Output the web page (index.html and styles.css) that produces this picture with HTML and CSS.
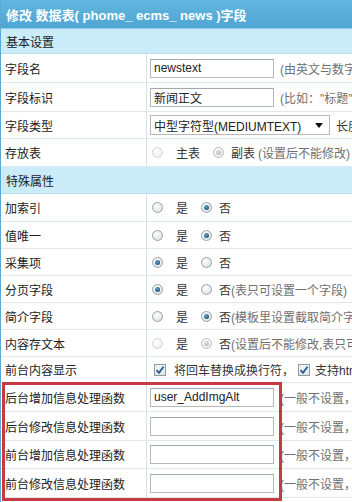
FILE: index.html
```html
<!DOCTYPE html>
<html lang="zh-CN">
<head>
<meta charset="utf-8">
<title>修改字段</title>
<link rel="stylesheet" href="styles.css">
</head>
<body>
<div class="page">
  <div class="head">修改 数据表( phome_ ecms_ news )字段</div>
  <div class="sec">基本设置</div>
  <div class="row h29"><div class="lab">字段名</div><div class="val"><span class="inp">newstext</span><span class="note">(由英文与数字组成，且不能以数字开头)</span></div></div>
  <div class="row h29"><div class="lab">字段标识</div><div class="val"><span class="inp">新闻正文</span><span class="note">(比如："标题")</span></div></div>
  <div class="row h27"><div class="lab">字段类型</div><div class="val"><span class="sel">中型字符型(MEDIUMTEXT)<span class="arr"></span></span><span class="txt ml6">长度</span></div></div>
  <div class="row h28"><div class="lab">存放表</div><div class="val"><span class="rd dis"></span><span class="txt opt">主表</span><span class="rd dis on"></span><span class="txt opt2">副表</span><span class="note ml3">(设置后不能修改)</span></div></div>
  <div class="sec h27">特殊属性</div>
  <div class="row h28"><div class="lab">加索引</div><div class="val"><span class="rd"></span><span class="txt opt">是</span><span class="rd on"></span><span class="txt opt2">否</span></div></div>
  <div class="row h27"><div class="lab">值唯一</div><div class="val"><span class="rd"></span><span class="txt opt">是</span><span class="rd on"></span><span class="txt opt2">否</span></div></div>
  <div class="row h27"><div class="lab">采集项</div><div class="val"><span class="rd on"></span><span class="txt opt">是</span><span class="rd"></span><span class="txt opt2">否</span></div></div>
  <div class="row h27"><div class="lab">分页字段</div><div class="val"><span class="rd on"></span><span class="txt opt">是</span><span class="rd"></span><span class="txt opt2">否</span><span class="note ml0">(表只可设置一个字段)</span></div></div>
  <div class="row h27"><div class="lab">简介字段</div><div class="val"><span class="rd"></span><span class="txt opt">是</span><span class="rd on"></span><span class="txt opt2">否</span><span class="note ml0">(模板里设置截取简介字数)</span></div></div>
  <div class="row h27"><div class="lab">内容存文本</div><div class="val"><span class="rd dis"></span><span class="txt opt">是</span><span class="rd dis on"></span><span class="txt opt2">否</span><span class="note ml0">(设置后不能修改,表只可设置一个字段)</span></div></div>
  <div class="row h26"><div class="lab">前台内容显示</div><div class="val"><span class="cb"><svg viewBox="0 0 12 12" width="12" height="12"><path d="M2.5 6.2 L5 8.8 L9.6 2.6" fill="none" stroke="#2f5f8c" stroke-width="1.8"/></svg></span><span class="txt ml8">将回车替换成换行符，</span><span class="cb ml7"><svg viewBox="0 0 12 12" width="12" height="12"><path d="M2.5 6.2 L5 8.8 L9.6 2.6" fill="none" stroke="#2f5f8c" stroke-width="1.8"/></svg></span><span class="txt ml5">支持html代码</span></div></div>
  <div class="row h29"><div class="lab">后台增加信息处理函数</div><div class="val"><span class="inp">user_AddImgAlt</span><span class="note">(一般不设置，直接使用默认)</span></div></div>
  <div class="row h29"><div class="lab">后台修改信息处理函数</div><div class="val"><span class="inp"></span><span class="note">(一般不设置，直接使用默认)</span></div></div>
  <div class="row h28"><div class="lab">前台增加信息处理函数</div><div class="val"><span class="inp"></span><span class="note">(一般不设置，直接使用默认)</span></div></div>
  <div class="row h29"><div class="lab">前台修改信息处理函数</div><div class="val"><span class="inp"></span><span class="note">(一般不设置，直接使用默认)</span></div></div>
  <div class="row h27"><div class="lab"></div><div class="val"></div></div>
  <div class="redbox"></div>
</div>
</body>
</html>
```

FILE: styles.css
```css
html, body {
  margin: 0;
  padding: 0;
  background: #ffffff;
  overflow: hidden;
}
body {
  width: 352px;
  height: 502px;
  font-family: "Liberation Sans", "Noto Sans CJK SC", sans-serif;
  font-size: 12px;
  color: #333333;
}
.page {
  position: relative;
  width: 700px;
  border-left: 1px solid #5aa9d4;
}
.head {
  height: 29px;
  box-sizing: border-box;
  display: flex;
  align-items: center;
  padding-left: 5px;
  background: linear-gradient(#62b6de, #4fa6d3);
  color: #ffffff;
  font-weight: bold;
  font-size: 13px;
  white-space: nowrap;
  border-bottom: 1px solid #8fcbe6;
}
.sec {
  height: 25px;
  box-sizing: border-box;
  display: flex;
  align-items: center;
  padding-left: 5px;
  background: #c9ecf8;
  color: #222222;
  border-bottom: 1px solid #b9dfee;
}
.sec.h27 { height: 27px; }
.row {
  display: flex;
  box-sizing: border-box;
  border-bottom: 1px solid #dde8ef;
  white-space: nowrap;
}
.h26 { height: 26px; }
.h27 { height: 27px; }
.h28 { height: 28px; }
.h29 { height: 29px; }
.lab {
  width: 146px;
  flex: none;
  box-sizing: border-box;
  border-right: 1px solid #d5e3ec;
  padding-left: 4px;
  display: flex;
  align-items: center;
  color: #222222;
}
.val {
  flex: 1;
  display: flex;
  align-items: center;
  padding-left: 3px;
}
.inp {
  width: 124px;
  height: 19px;
  box-sizing: border-box;
  border: 1px solid #b5b9bd;
  border-top-color: #a3a8ad;
  background: #ffffff;
  display: flex;
  align-items: center;
  padding-left: 3px;
  color: #222222;
  flex: none;
}
.note {
  color: #707070;
  margin-left: 6px;
}
.ml0 { margin-left: 0; }
.ml3 { margin-left: 3px; }
.ml5 { margin-left: 5px; }
.ml6 { margin-left: 6px; }
.ml7 { margin-left: 7px; }
.ml8 { margin-left: 8px; }
.txt { color: #333333; }
.sel {
  width: 180px;
  height: 20px;
  box-sizing: border-box;
  border: 1px solid #b5b9bd;
  display: flex;
  align-items: center;
  padding-left: 3px;
  position: relative;
  color: #222222;
  flex: none;
}
.arr {
  position: absolute;
  right: 6px;
  top: 7px;
  width: 0;
  height: 0;
  border-left: 4px solid transparent;
  border-right: 4px solid transparent;
  border-top: 5px solid #111111;
}
.rd {
  width: 11px;
  height: 11px;
  box-sizing: border-box;
  border-radius: 50%;
  border: 1px solid #9aa4ab;
  background: radial-gradient(circle at 40% 35%, #ffffff, #d4d8db);
  display: inline-block;
  position: relative;
  flex: none;
  margin-left: 2px;
}
.rd.on::after {
  content: "";
  position: absolute;
  left: 2px;
  top: 2px;
  width: 5px;
  height: 5px;
  border-radius: 50%;
  background: radial-gradient(circle at 40% 35%, #5ea7cf, #0f3a57);
}
.rd.dis {
  border-color: #d3d6d8;
  background: radial-gradient(circle at 40% 35%, #ffffff, #e8eaeb);
}
.rd.dis.on {
  border-color: #b9bdc0;
}
.rd.dis.on::after {
  background: radial-gradient(circle at 40% 35%, #e0e0e0, #a9adb0);
}
.opt { margin-left: 13px; margin-right: 11px; }
.opt2 { margin-left: 7px; }
.cb {
  width: 12px;
  height: 12px;
  box-sizing: border-box;
  border: 1px solid #8e9aa3;
  background: linear-gradient(#f4f6f8, #dfe4e8);
  display: inline-flex;
  align-items: center;
  justify-content: center;
  margin-left: 4px;
  flex: none;
  position: relative;
}
.cb svg {
  position: absolute;
  left: -1px;
  top: -1px;
}
.redbox {
  position: absolute;
  left: 1px;
  top: 382px;
  width: 280px;
  height: 119px;
  box-sizing: border-box;
  border: 3px solid #c53b42;
  pointer-events: none;
}
```
